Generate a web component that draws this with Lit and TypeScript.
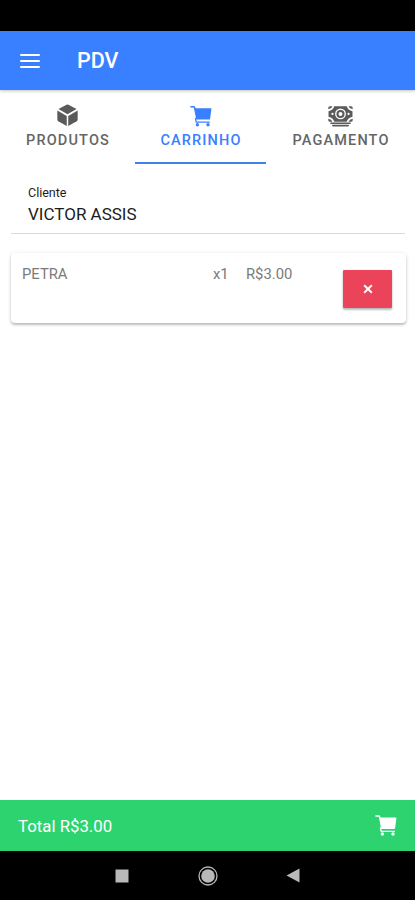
import { LitElement, html, css, svg } from "lit";
import { customElement } from "lit/decorators.js";

const cart = svg`
  <path d="M.9 1h3.300l.9 2.600" fill="none" stroke="currentColor" stroke-width="1.500" stroke-linecap="round" stroke-linejoin="round"/>
  <path d="M4 2.500h16.700q.8 0 .7.800l-1.300 9.700q-.1.900-1 .9H6.200z"/>
  <path d="M5.500 13l.7 3.400h13.200" fill="none" stroke="currentColor" stroke-width="1.300" stroke-linecap="round" stroke-linejoin="round"/>
  <circle cx="7.400" cy="19" r="1.700"/><circle cx="18" cy="19" r="1.700"/>`;

const cube = svg`
  <path d="M11 .7 Q12 .2 13 .7 L21.400 5.300 L12 10.700 L2.600 5.300z"/>
  <path d="M1.400 6.800 L11.200 12.400 V23 L2.400 18 Q1.400 17.400 1.400 16.300z"/>
  <path d="M22.600 6.800 L12.800 12.400 V23 L21.600 18 Q22.600 17.400 22.600 16.300z"/>`;

const cash = svg`
  <path d="M6 .5h12q1 3.700 5.500 4.800v5.400Q19 11.800 18 15.500H6Q5 11.800.5 10.700V5.300Q5 4.200 6 .5zM12 2.800a5.200 5.200 0 1 0 0 10.400 5.200 5.200 0 0 0 0-10.400zM4.300 6.900a1.100 1.100 0 1 0 0 2.200 1.100 1.100 0 0 0 0-2.200zM19.700 6.900a1.100 1.100 0 1 0 0 2.200 1.100 1.100 0 0 0 0-2.200z" fill-rule="evenodd"/>
  <circle cx="12" cy="8" r="2.900" fill="none" stroke="currentColor" stroke-width="2"/>
  <path d="M.3 3.500V2Q.3.500 1.800.5h2.500Q3.500 3 .3 3.500zM23.700 3.500V2q0-1.500-1.500-1.500h-2.500Q20.500 3 23.700 3.500zM.3 12.500V14q0 1.500 1.500 1.500h2.500Q3.500 13 .3 12.500zM23.700 12.500V14q0 1.500-1.500 1.500h-2.500Q20.500 13 23.700 12.500z"/>
  <path d="M2.800 17h18.400M4.600 19.200h14.800" fill="none" stroke="currentColor" stroke-width="1.500" stroke-linecap="round"/>`;

@customElement("app-root")
export class AppRoot extends LitElement {
  static styles = css`
    :host {
      display: flex;
      flex-direction: column;
      height: 900px;
      background: #fff;
      font-family: Roboto, sans-serif;
      overflow: hidden;
    }
    * { box-sizing: border-box; }
    svg { display: block; fill: currentColor; }
    .status { height: 31px; background: #000; }
    .header {
      height: 59px;
      background: #3880ff;
      color: #fff;
      display: flex;
      align-items: center;
      padding: 0 20px;
      box-shadow: 0 1px 3px rgba(0, 0, 0, 0.25);
      position: relative;
    }
    .title { margin-left: 37px; font-size: 21.5px; font-weight: 500; line-height: 28px; }
    .tabs { height: 74px; display: grid; grid-template-columns: 135px 131px 149px; }
    .tab {
      display: flex;
      flex-direction: column;
      align-items: center;
      padding-top: 14px;
      color: #666;
      font-size: 14.5px;
      font-weight: 500;
      letter-spacing: 1.15px;
      line-height: 18px;
      border-bottom: 2px solid transparent;
    }
    .tab svg { height: 23px; margin-bottom: 4px; color: #5a5a5a; }
    .tab.active svg { color: #3880ff; }
    .tab span { margin-right: -1px; padding-top: 1px; }
    .tab.active { color: #3880ff; border-color: #3f83ea; }
    .client {
      height: 70px;
      margin: 0 10px 0 11px;
      padding: 21px 17px 0;
      border-bottom: 1px solid #dadada;
      color: #1c1c1c;
    }
    .label { font-size: 12.5px; line-height: 16px; }
    .value { font-size: 17px; line-height: 27px; }
    .card {
      height: 70px;
      margin: 19px 9px 0 11px;
      padding: 11px 14px 0 11px;
      display: grid;
      grid-template-columns: 191px 33px 97px 49px;
      border-radius: 4px;
      box-shadow: 0 2px 2px rgba(0, 0, 0, 0.18), 0 1px 4px rgba(0, 0, 0, 0.14);
      color: #7b7b7b;
      font-size: 14.8px;
      line-height: 21px;
    }
    .remove {
      width: 49px;
      height: 38px;
      margin-top: 6px;
      padding: 0;
      border: 0;
      border-radius: 1px;
      background: #eb445a;
      color: #fff;
      display: flex;
      align-items: center;
      justify-content: center;
      box-shadow: 0 2px 2px rgba(0, 0, 0, 0.2), 0 1px 3px rgba(0, 0, 0, 0.14);
    }
    .space { flex: 1; }
    .total {
      height: 51px;
      background: #2dd36f;
      color: #fff;
      display: flex;
      align-items: center;
      justify-content: space-between;
      padding: 0 18px;
      font-size: 16.8px;
    }
    .nav {
      height: 49px;
      background: #000;
      color: #b9b9b9;
      display: flex;
      align-items: center;
      padding-left: 115px;
    }
    .home { margin-left: 69px; }
    .back { margin-left: 68px; }
  `;

  render() {
    return html`
      <div class="status"></div>
      <header class="header">
        <svg width="20" height="16" viewBox="0 0 20 16"><path d="M1 2h18M1 8h18M1 14h18" stroke="currentColor" stroke-width="2" stroke-linecap="round"/></svg>
        <div class="title">PDV</div>
      </header>
      <nav class="tabs">
        <div class="tab"><svg width="23" viewBox="0 0 24 24">${cube}</svg><span>PRODUTOS</span></div>
        <div class="tab active"><svg width="22" viewBox="0 -1.700 22 23">${cart}</svg><span>CARRINHO</span></div>
        <div class="tab"><svg width="25" viewBox="0 -1.500 24 22">${cash}</svg><span>PAGAMENTO</span></div>
      </nav>
      <section class="client">
        <div class="label">Cliente</div>
        <div class="value">VICTOR ASSIS</div>
      </section>
      <section class="card">
        <span>PETRA</span><span>x1</span><span>R$3.00</span>
        <button class="remove" aria-label="Remover">
          <svg width="10" height="10" viewBox="0 0 10 10"><path d="M1.200 1.200l7.600 7.600M8.800 1.200l-7.600 7.600" stroke="currentColor" stroke-width="2"/></svg>
        </button>
      </section>
      <div class="space"></div>
      <footer class="total">
        <span>Total R$3.00</span>
        <svg width="22" height="21" viewBox="0 0 22 21">${cart}</svg>
      </footer>
      <div class="nav">
        <svg width="14" height="14"><rect x=".5" y=".5" width="13" height="13"/></svg>
        <svg class="home" width="20" height="20"><circle cx="10" cy="10" r="6.800"/><circle cx="10" cy="10" r="9" fill="none" stroke="currentColor" stroke-width="1.300"/></svg>
        <svg class="back" width="14" height="15"><path d="M13.500 .5v14L.5 7.500z"/></svg>
      </div>
    `;
  }
}
